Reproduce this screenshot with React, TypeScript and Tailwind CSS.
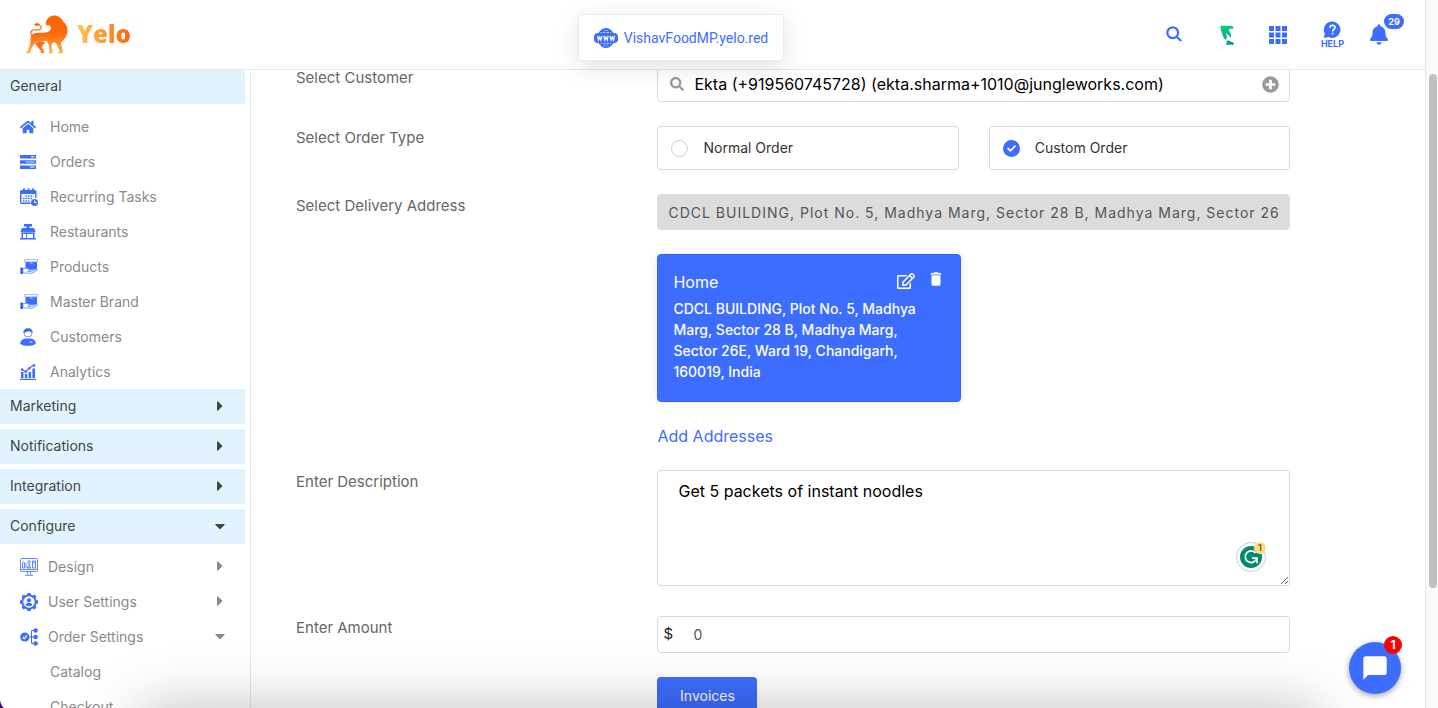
import { ReactNode, useState } from 'react';
import {
    FaBell,
    FaCaretDown,
    FaCaretRight,
    FaCheck,
    FaHome,
    FaPlusCircle,
    FaRegEdit,
    FaSearch,
} from 'react-icons/fa';
import { MdChatBubble, MdDelete } from 'react-icons/md';

const ADDRESS =
    'CDCL BUILDING, Plot No. 5, Madhya Marg, Sector 28 B, Madhya Marg, Sector 26E, Ward 19, Chandigarh, 160019, India';

const LionLogo = () => (
    <svg className="h-10 w-11" viewBox="76 40 132 120" aria-hidden="true">
        <defs>
            <linearGradient id="lion" x1="0" y1="0" x2="0" y2="1">
                <stop offset="0" stopColor="#ff6200" />
                <stop offset="0.5" stopColor="#ff6a0a" />
                <stop offset="1" stopColor="#ffb74a" />
            </linearGradient>
            <linearGradient id="leg" x1="0" y1="0" x2="1" y2="1">
                <stop offset="0" stopColor="#ff5500" />
                <stop offset="1" stopColor="#ff8a2a" />
            </linearGradient>
        </defs>
        {/* mane, chest and front legs, then back and hind leg */}
        <path
            fill="url(#lion)"
            d="M138 68c0-8 5-15 12-19 8-6 20-6 28 0 6 3 10 8 13 14 7 5 12 13 12 22 1 8 0 15-4 21-2 6-6 11-11 15-3 2-4 4-4 7l5 24 1 5c-1 1-3 1-5 1h-11c0-3 3-4 6-5l-8-21c-2-4-5-6-9-7l-5 3-3 8 4 15c0 4-1 6-3 7h-9c0-3 1-4 3-5l-3-22-7-11c-12 2-20 1-26 3l-12 9-9 17c0 4-1 7-3 9H79c0-3 2-5 5-6l7-21 2-20c0-7 5-12 12-13 12-3 25 0 37-3 7-2 11-6 12-12 0-5-3-8-8-9-4 1-7-1-8-6z"
        />
        <path
            fill="url(#leg)"
            d="M107 129l12-7 17 2-10 14 6 12c2 3 2 5 1 7h-10c-1-2 0-4 1-5l-9-12z"
        />
        <path
            fill="none"
            stroke="#ff7416"
            strokeWidth="4"
            strokeLinecap="round"
            d="M99 105c-6-3-7-10-4-14 5-6 16-2 24-4 6-2 8-8 4-11-3-3-8-4-12-4"
        />
        <path fill="#ff6200" d="M103 72c4-5 11-5 18-1-5 4-13 6-18 1z" />
    </svg>
);

const WwwIcon = () => (
    <svg className="h-5 w-6" viewBox="0 0 24 20" fill="none" stroke="#3d6dff">
        <path
            strokeWidth="1.4"
            d="M12 .8v18.4M5 5.500C7 2.500 9.500.8 12 .8s5 1.700 7 4.700M5 14.500c2 3 4.500 4.700 7 4.700s5-1.700 7-4.700M8 5.500C9 2.500 10.500.8 12 .8s3 1.700 4 4.700M8 14.500c1 3 2.500 4.700 4 4.700s3-1.700 4-4.700M6 3.500h12M6 16.500h12"
        />
        <rect x=".5" y="5.500" width="23" height="9" rx="3" fill="#3d6dff" />
        <path
            stroke="#fff"
            strokeWidth="1.2"
            d="M3.500 8l1 4 1.200-3 1.200 3 1-4M9.800 8l1 4 1.200-3 1.200 3 1-4M16.100 8l1 4 1.200-3 1.200 3 1-4"
        />
    </svg>
);

const BrandIcon = () => (
    <svg className="h-5 w-4" viewBox="38 28 42 58">
        <defs>
            <linearGradient id="brand" x1="0" y1="0" x2="0" y2="1">
                <stop offset="0" stopColor="#0fd077" />
                <stop offset="1" stopColor="#0f9f96" />
            </linearGradient>
        </defs>
        <path
            fill="url(#brand)"
            d="M40 30h34l5 9H68c-4 0-5 3-2 7 4 6 6 13 4 20-4-7-9-11-14-15 3 7 3 14 0 21L46 61l3-1-6-6 3-1c-5-6-6-15-6-23z"
        />
        <path
            fill="#0b96a8"
            d="M58 74c4-2 7-1 10 1 4 2 8 2 11 6v4H56c2-4 3-7 2-11z"
        />
    </svg>
);

const GridIcon = () => (
    <svg className="size-[18px]" viewBox="0 0 18 18" fill="#3d6dff">
        {[0, 6.5, 13].map((y) =>
            [0, 6.5, 13].map((x) => (
                <rect key={`${x}-${y}`} x={x} y={y} width="5" height="5" />
            ))
        )}
    </svg>
);

const HelpIcon = () => (
    <svg className="size-[18px]" viewBox="0 0 18 18">
        <path
            fill="#3d6dff"
            d="M9.500.5a8.200 8.200 0 1 1-4 15.500L.8 17l1-4.500A8.200 8.200 0 0 1 9.500.5z"
        />
        <path
            fill="none"
            stroke="#fff"
            strokeWidth="1.6"
            d="M7 6.800C7 5 8.200 4.300 9.400 4.300S12 5.100 12 6.600c0 1.700-2.500 1.800-2.500 4M9.500 11.800v1.700"
        />
    </svg>
);

const OrdersIcon = () => (
    <svg className="size-4" viewBox="0 0 16 16" fill="#3d6dff">
        <path d="M0 1h16v3.500H0zM0 6.200h16v3.500H0zM0 11.400h16v3.500H0z" />
        <path fill="#fff" d="M11 2.200h3.500v1H11zM10 12.600h4.500v1H10z" />
        <path fill="#b9caff" d="M6 7.400h8.500v1.200H6z" />
    </svg>
);

const CalendarIcon = () => (
    <svg className="size-[18px]" viewBox="0 0 18 18">
        <path
            fill="#3d6dff"
            d="M2 2h1V.5h2V2h2.500V.5h2V2H12V.5h2V2h1a1.500 1.500 0 0 1 1.500 1.500V10h-1.300V6H1.500v8.500h9V16H2a2 2 0 0 1-2-2V3.500A1.500 1.500 0 0 1 2 2z"
        />
        <path
            stroke="#3d6dff"
            strokeWidth="1.500"
            strokeDasharray="1.500 1"
            d="M5.500 8h8M3 10.500h10M3 13h7"
        />
        <circle cx="14.500" cy="14.500" r="3.500" fill="#3d6dff" />
        <path fill="none" stroke="#fff" d="M14.500 12.500v2h2" />
    </svg>
);

const StoreIcon = () => (
    <svg className="size-4" viewBox="0 0 16 16" fill="#3d6dff">
        <path d="M4 0h8v2.500H9.500V4H14l1.500 3.500a1.300 1.300 0 0 1-2.500 0 1.300 1.300 0 0 1-2.500 0 1.300 1.300 0 0 1-2.500 0 1.300 1.300 0 0 1-2.500 0 1.300 1.300 0 0 1-2.500 0 1.300 1.300 0 0 1-2.500 0L2 4h4.500V2.500H4z" />
        <path
            fillRule="evenodd"
            d="M1.500 8.500h13V14H16v1.500H0V14h1.500zM3 10v4h3.200v-4zM7.200 10v4H13v-4z"
        />
    </svg>
);

const ProductIcon = () => (
    <svg className="size-[18px]" viewBox="0 0 18 18" fill="#3d6dff">
        <path d="M5.500 4H17v7.200l-6 .8-5.500-2z" />
        <path
            fill="#fff"
            stroke="#7f9fff"
            strokeWidth=".7"
            d="M4.600 1.500h12.800v2.300H4.600z"
        />
        <path fill="#7f9fff" d="M10 4h2.500v2.600l-1.300-.8-1.200.8z" />
        <path fill="#1f4fe0" d="M.5 9.500h2.300v6.500H.5z" />
        <path
            fill="#fff"
            stroke="#5f87ff"
            strokeWidth=".8"
            d="M3 10.500h3.500L10 12c1 .5.500 1.300-.5 1.300H7.500h4l5-2c1-.2 1.300.8.500 1.300l-5.500 2.600H6L3 14.500z"
        />
    </svg>
);

const CustomerIcon = () => (
    <svg className="h-[18px] w-4" viewBox="0 0 16 18" fill="#3d6dff">
        <circle
            cx="8"
            cy="5"
            r="4"
            fill="#fff"
            stroke="#3d6dff"
            strokeWidth=".7"
        />
        <path d="M3.500 5C3 2 5 .2 8 .2S13 2 12.500 5C11 4 9.800 3.700 9 2.900 7.500 4 5 4 3.500 5z" />
        <path d="M.3 16c0-3.500 1.700-4.800 5-5.500h5.400c3.300.7 5 2 5 5.500-2 1.300-4.700 1.800-7.700 1.800S2.300 17.300.3 16z" />
        <path fill="#fff" d="M9.500 13.500h3v1h-3z" />
    </svg>
);

const AnalyticsIcon = () => (
    <svg className="size-4" viewBox="0 0 16 16" fill="#3d6dff">
        <path d="M1 8h2.500v6H1zM4.800 10h2.500v4H4.800zM8.600 8h2.500v6H8.600zM12.400 4.500H15V14h-2.600zM0 14.800h16V16H0z" />
        <path
            fill="none"
            stroke="#3d6dff"
            strokeWidth="1.100"
            d="M2 5.500l3.500 2.200L9.300 4l4-2.500"
        />
        <circle cx="2" cy="5.500" r="1.200" />
        <circle cx="5.800" cy="7.700" r="1.200" />
        <circle cx="9.300" cy="4.500" r="1.200" />
        <circle cx="14" cy="1.400" r="1.300" />
    </svg>
);

const DesignIcon = () => (
    <svg
        className="size-[18px]"
        viewBox="0 0 18 18"
        fill="none"
        stroke="#5f87ff"
        strokeWidth="1"
    >
        <rect x=".5" y=".5" width="17" height="13" rx="1" />
        <path d="M.5 11.500h17M7.500 13.500v3M10.500 13.500v3M5 17.300h8M2.500 10V5l1-1.500 1 1.500v5zM12.500 3v7h3V3zM14 3v3M9 5.500V10M7 10l2-2.500 2 2.500z" />
        <circle cx="9" cy="4" r="1.300" />
        <path d="M6 5v5" />
    </svg>
);

const UserSettingsIcon = () => (
    <svg className="size-[18px]" viewBox="0 0 18 18" fill="#3d6dff">
        <path
            fillRule="evenodd"
            d="M7.500 0h3l.6 1.700 1.700.7L14.500 1.600 16.400 3.600l-.8 1.600.7 1.700L18 7.500v3l-1.700.6-.7 1.700.8 1.700-2 1.900-1.600-.8-1.700.7-.6 1.700h-3l-.6-1.700-1.700-.7-1.700.8-1.900-2 .8-1.600-.7-1.700L0 10.500v-3l1.700-.6.7-1.700-.8-1.700 2-1.900 1.600.8 1.700-.7zM9 3.300a5.700 5.700 0 1 0 0 11.400A5.700 5.700 0 0 0 9 3.300z"
        />
        <circle cx="9" cy="7.300" r="2.100" />
        <path d="M5.600 12.300c0-1.700 1.400-2.500 3.400-2.500s3.400.8 3.400 2.500c-1.800 1.300-5 1.300-6.800 0z" />
    </svg>
);

const OrderSettingsIcon = () => (
    <svg className="size-[18px]" viewBox="0 0 18 18" fill="#3d6dff">
        <circle cx="4.800" cy="9" r="4.600" />
        <path
            fill="none"
            stroke="#fff"
            strokeWidth="1.200"
            d="M2.700 9l1.500 1.600L7 7.500"
        />
        <path fill="none" stroke="#3d6dff" d="M9 9h7M15 2.500h-3.500v13H15" />
        <circle cx="15.600" cy="2.500" r="2.300" />
        <circle cx="15.600" cy="9" r="2.300" />
        <circle cx="15.600" cy="15.500" r="2.300" />
    </svg>
);

const GrammarIcon = () => (
    <svg className="size-[22px]" viewBox="0 0 22 22">
        <circle cx="11" cy="11" r="11" fill="#048a71" />
        <path
            fill="none"
            stroke="#fff"
            strokeWidth="1.700"
            d="M15.500 7A5.800 5.800 0 1 0 16.600 12.500M12 12.200h5v5"
        />
    </svg>
);

const menu = [
    { label: 'Home', icon: <FaHome className="size-4 text-[#3d6dff]" /> },
    { label: 'Orders', icon: <OrdersIcon /> },
    { label: 'Recurring Tasks', icon: <CalendarIcon /> },
    { label: 'Restaurants', icon: <StoreIcon /> },
    { label: 'Products', icon: <ProductIcon /> },
    { label: 'Master Brand', icon: <ProductIcon /> },
    { label: 'Customers', icon: <CustomerIcon /> },
    { label: 'Analytics', icon: <AnalyticsIcon /> },
];

const configure = [
    { label: 'Design', icon: <DesignIcon />, open: false },
    { label: 'User Settings', icon: <UserSettingsIcon />, open: false },
    { label: 'Order Settings', icon: <OrderSettingsIcon />, open: true },
];

const Caret = (props: { open?: boolean }) =>
    props.open ? (
        <FaCaretDown className="size-4" />
    ) : (
        <FaCaretRight className="size-4" />
    );

const Section = (props: { title: string; open?: boolean; caret?: boolean }) => (
    <button className="flex h-[35px] w-full shrink-0 items-center justify-between bg-[#e1f3ff] pr-[17px] pb-0.5 pl-2.5 text-sm text-[#444]">
        {props.title}
        {props.caret && <Caret open={props.open} />}
    </button>
);

const Sidebar = () => (
    <nav className="-mt-px w-[251px] shrink-0 border-r border-[#e8e8e8] pr-[5px]">
        <Section title="General" />
        <ul className="pt-[5px]">
            {menu.map((item) => (
                <li key={item.label}>
                    <a
                        href="#"
                        className="flex h-[35px] items-center pl-5 text-sm text-[#8a8a8a]"
                    >
                        <span className="w-[30px]">{item.icon}</span>
                        {item.label}
                    </a>
                </li>
            ))}
        </ul>
        <div className="flex flex-col gap-[5px]">
            <Section title="Marketing" caret />
            <Section title="Notifications" caret />
            <Section title="Integration" caret />
            <Section title="Configure" caret open />
        </div>
        <ul className="pt-[5px]">
            {configure.map((item) => (
                <li key={item.label}>
                    <a
                        href="#"
                        className="flex h-[35px] items-center pr-[17px] pl-5 text-sm text-[#8a8a8a]"
                    >
                        <span className="w-7">{item.icon}</span>
                        <span className="grow">{item.label}</span>
                        <span className="pb-0.5">
                            <Caret open={item.open} />
                        </span>
                    </a>
                </li>
            ))}
            {['Catalog', 'Checkout'].map((label) => (
                <li key={label}>
                    <a
                        href="#"
                        className="flex h-[35px] items-center pl-[50px] text-sm text-[#8a8a8a]"
                    >
                        {label}
                    </a>
                </li>
            ))}
        </ul>
    </nav>
);

const Header = () => (
    <header className="relative z-10 flex h-[70px] shrink-0 items-center border-b border-[#e6e8ee] bg-white pr-6 pl-[25px]">
        <a href="#" className="flex flex-1 items-center gap-2 pb-0.5">
            <LionLogo />
            <span className="bg-linear-to-r from-[#ffc552] to-[#ff6200] bg-clip-text font-['Open_Sans',sans-serif] text-2xl font-extrabold text-transparent">
                Yelo
            </span>
        </a>
        <a
            href="#"
            className="mt-1.5 mr-16 flex h-[47px] items-center gap-1.5 rounded-sm border border-[#ebebeb] bg-white px-[15px] font-['Roboto',sans-serif] text-sm text-[#3d6dff] shadow-[0_6px_24px_rgba(0,0,0,0.12)]"
        >
            <WwwIcon />
            VishavFoodMP.yelo.red
        </a>
        <div className="flex flex-1 items-center justify-end">
            <button aria-label="Search" className="mr-[37px] pb-0.5">
                <svg
                    className="size-4"
                    viewBox="0 0 16 16"
                    fill="none"
                    stroke="#3d6dff"
                    strokeWidth="2.200"
                >
                    <circle cx="6.700" cy="6.700" r="5.400" />
                    <path d="M10.700 10.700l4.500 4.300" />
                </svg>
            </button>
            <button aria-label="Brand" className="mr-[34px]">
                <BrandIcon />
            </button>
            <button aria-label="Apps" className="mr-[34px]">
                <GridIcon />
            </button>
            <button className="mr-[26px] flex flex-col items-center text-[9px] leading-[10px] font-bold text-[#3d6dff]">
                <HelpIcon />
                HELP
            </button>
            <button aria-label="Notifications" className="relative mr-[13px]">
                <FaBell className="h-[21px] w-[18px] text-[#3d6dff]" />
                <span className="absolute -top-2.5 left-3.5 flex h-[15px] w-5 items-center justify-center rounded-full bg-[#3d6dff] text-[9px] font-bold text-white">
                    29
                </span>
            </button>
        </div>
    </header>
);

const Row = (props: { label: string; htmlFor?: string; children: ReactNode }) => (
    <div className="grid grid-cols-11">
        <label
            htmlFor={props.htmlFor}
            className="col-span-4 text-[15px] leading-6 text-[#666]"
        >
            {props.label}
        </label>
        <div className="col-span-7">{props.children}</div>
    </div>
);

const OrderForm = () => {
    const [type, setType] = useState('Custom Order');

    return (
        <form className="-mt-1 flex flex-col gap-6 pr-[135px] pl-[45px]">
            <Row label="Select Customer" htmlFor="customer">
                <div className="flex h-9 items-center rounded-sm border border-[#d9d9d9] px-2.5">
                    <FaSearch className="mx-0.5 size-3.5 text-[#999]" />
                    <input
                        id="customer"
                        className="min-w-0 grow px-2 text-base text-black outline-none"
                        defaultValue="Ekta (+919560745728) (ekta.sharma+1010@jungleworks.com)"
                    />
                    <button type="button" aria-label="Add customer">
                        <FaPlusCircle className="size-[17px] text-[#999]" />
                    </button>
                </div>
            </Row>
            <Row label="Select Order Type">
                <div className="grid grid-cols-2 gap-[30px]">
                    {['Normal Order', 'Custom Order'].map((name) => (
                        <label
                            key={name}
                            className="flex h-11 items-center rounded-sm border border-[#d9d9d9] pl-[13px] text-sm text-[#333]"
                        >
                            <input
                                type="radio"
                                name="orderType"
                                className="sr-only"
                                checked={type === name}
                                onChange={() => setType(name)}
                            />
                            <span
                                className={`mr-[15px] flex size-[17px] items-center justify-center rounded-full ${
                                    type === name
                                        ? 'bg-[#3d6dff]'
                                        : 'border border-[#ccc]'
                                }`}
                            >
                                {type === name && (
                                    <FaCheck className="size-[9px] text-white" />
                                )}
                            </span>
                            {name}
                        </label>
                    ))}
                </div>
            </Row>
            <Row label="Select Delivery Address" htmlFor="address">
                <input
                    id="address"
                    className="block h-9 w-full rounded-sm border border-[#dcdcdc] bg-[#dcdcdc] px-2.5 text-sm tracking-[1px] text-[#555]"
                    readOnly
                    defaultValue={ADDRESS}
                />
                <div className="mt-6 h-[148px] w-[304px] rounded-sm border border-[#3563f0] bg-[#3d6dff] p-[15px] text-white shadow-[0_0_10px_rgba(0,0,0,0.08)]">
                    <div className="flex items-start">
                        <h3 className="grow pb-1 text-base">Home</h3>
                        <button type="button" aria-label="Edit address">
                            <FaRegEdit className="mt-0.5 mr-3 size-[18px]" />
                        </button>
                        <button type="button" aria-label="Delete address">
                            <MdDelete className="size-[18px]" />
                        </button>
                    </div>
                    <p className="w-[250px] text-sm leading-[21px] font-medium">
                        {ADDRESS}
                    </p>
                </div>
                <a
                    href="#"
                    className="mt-6 block text-base leading-5 text-[#3d6dff]"
                >
                    Add Addresses
                </a>
            </Row>
            <Row label="Enter Description" htmlFor="description">
                <div className="relative mb-1.5">
                    <textarea
                        id="description"
                        className="block h-[116px] w-full rounded-sm border border-[#d9d9d9] px-5 py-2 text-base text-black"
                        defaultValue="Get 5 packets of instant noodles"
                    />
                    <span className="absolute right-6 bottom-3.5 flex size-[30px] items-center justify-center rounded-full border border-[#ccccdc] bg-white">
                        <GrammarIcon />
                        <span className="absolute -top-px -right-px flex size-3 items-center justify-center rounded-full bg-[#ffdc8a] text-[9px] font-bold text-[#8a6100]">
                            1
                        </span>
                    </span>
                </div>
            </Row>
            <Row label="Enter Amount" htmlFor="amount">
                <div className="flex h-[37px] items-center rounded-sm border border-[#d9d9d9] px-[5px]">
                    <span className="w-[30px] text-[15px] text-[#222]">$</span>
                    <input
                        id="amount"
                        className="min-w-0 grow text-sm text-[#555]"
                        defaultValue="0"
                    />
                </div>
                <button
                    type="button"
                    className="mt-6 h-[38px] w-[100px] rounded-sm bg-[#3d6dff] text-sm text-white"
                >
                    Invoices
                </button>
            </Row>
        </form>
    );
};

export default function App() {
    return (
        <div className="relative flex h-screen overflow-hidden bg-white font-['Inter',sans-serif]">
            <div className="flex min-w-0 grow flex-col">
                <Header />
                <div className="flex min-h-0 grow overflow-hidden">
                    <Sidebar />
                    <main className="min-w-0 grow">
                        <OrderForm />
                    </main>
                </div>
            </div>
            <div className="w-[13px] shrink-0 border-l border-[#e6e6e6] bg-[#fafafa] px-[3px] pt-[74px]">
                <div className="h-[514px] w-2 rounded-full bg-[#c1c1c1]" />
            </div>

            {/* shadow of whatever sits below the window */}
            <div className="pointer-events-none absolute top-full right-[120px] left-[140px] z-20 h-20 shadow-[0_0_60px_rgba(0,0,0,0.26)]" />
            <svg
                className="absolute bottom-0 left-0 z-20 h-2 w-1"
                viewBox="0 0 4 8"
            >
                <path fill="#3a0a6e" d="M0 0c.5 3.500 1.500 6 4 8H0z" />
            </svg>

            <button
                aria-label="Open chat"
                className="absolute right-[37px] bottom-3.5 z-30 flex size-[52px] items-center justify-center rounded-full bg-[#3d6dff] shadow-[0_2px_6px_rgba(0,0,0,0.35)]"
            >
                <MdChatBubble className="size-7 text-white" />
                <span className="absolute -top-1.5 -right-px flex size-[18px] items-center justify-center rounded-full bg-[#f00] text-xs font-bold text-white">
                    1
                </span>
            </button>
        </div>
    );
}
